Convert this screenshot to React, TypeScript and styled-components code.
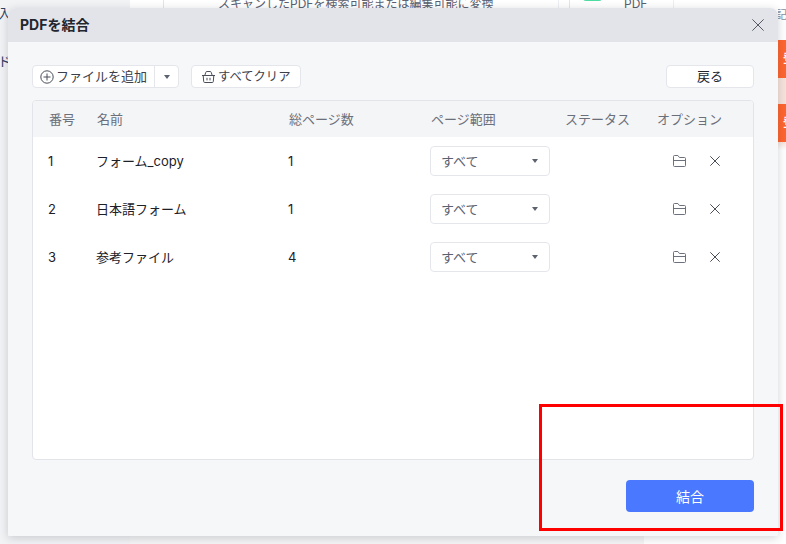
import React from "react";
import styled, { createGlobalStyle } from "styled-components";

const Global = createGlobalStyle`
  html, body { margin: 0; padding: 0; width: 786px; height: 544px; overflow: hidden; background: #fff; }
  body { font-family: Inter, "Noto Sans CJK JP", "Noto Sans", sans-serif; }
  * { box-sizing: border-box; }
`;

const Page = styled.div`
  position: relative;
  width: 786px;
  height: 544px;
  overflow: hidden;
  display: flex;
`;
const SideBar = styled.aside`
  width: 130px;
  background: #f2f3f5;
  display: flex;
  flex-direction: column;
  gap: 30px;
  padding-top: 4px;
  font-size: 13px;
  line-height: 18px;
  color: #2f4060;
`;
const SideLabel = styled.div`
  white-space: nowrap;
  margin-left: -2px;
`;
const Main = styled.main`
  flex: 1;
  display: flex;
  flex-direction: column;
  justify-content: space-between;
`;
const BackRow = styled.div`
  display: flex;
  padding-left: 33px;
  gap: 10px;
`;
const BackCard = styled.div<{ $w: number }>`
  width: ${(p) => p.$w}px;
  height: 12px;
  border-left: 1px solid #e4e5ea;
  border-right: 1px solid #eeeff2;
  margin-top: -2px;
  padding-left: 54px;
  font-size: 12px;
  line-height: 12px;
  color: #5a6070;
  white-space: nowrap;
  overflow: hidden;
  position: relative;
`;
const GreenMark = styled.span`
  position: absolute;
  left: 13px;
  top: 0;
  width: 19px;
  height: 3px;
  background: #4fdca3;
  border-radius: 0 0 3px 3px;
`;
const BottomStrip = styled.div`
  width: 514px;
  height: 8px;
  background: #f5f5f6;
`;
const RightEdge = styled.div`
  position: absolute;
  right: 0;
  top: 0;
  width: 8px;
  height: 150px;
  overflow: hidden;
  display: flex;
  flex-direction: column;
  background: linear-gradient(#fff 0, #fff 78px, #f7e3db 78px, #f7e3db 142px, #fff 150px);
`;
const EdgeNote = styled.div`
  height: 40px;
  flex: none;
  padding-top: 8px;
  margin-left: -2px;
  font-size: 11px;
  line-height: 14px;
  color: #8a8f9c;
  white-space: nowrap;
`;
const EdgeTab = styled.div`
  height: 38px;
  flex: none;
  margin-bottom: 26px;
  background: #ff6530;
  color: #fff;
  font-size: 12px;
  font-weight: 700;
  line-height: 38px;
  padding-left: 5px;
  white-space: nowrap;
`;
const Modal = styled.section`
  position: absolute;
  left: 8px;
  top: 8px;
  width: 770px;
  height: 528px;
  background: #f6f7f9;
  border-radius: 8px 8px 1px 1px;
  box-shadow: 0 2px 10px rgba(30, 35, 50, 0.2);
  display: flex;
  flex-direction: column;
`;
const Header = styled.header`
  height: 34px;
  flex: none;
  background: #e3e4e9;
  border-radius: 8px 8px 0 0;
  display: flex;
  align-items: center;
  justify-content: space-between;
  padding: 0 14px 0 12px;
`;
const Title = styled.h1`
  margin: 0;
  padding-bottom: 2px;
  font-size: 14px;
  font-weight: 700;
  color: #22262f;
`;
const Body = styled.div`
  flex: 1;
  display: flex;
  flex-direction: column;
  padding: 23px 24px 24px;
  min-height: 0;
`;
const Toolbar = styled.div`
  display: flex;
  align-items: center;
  height: 23px;
  gap: 12px;
  margin-bottom: 12px;
`;
const SplitButton = styled.div`
  display: flex;
  height: 23px;
  background: #fff;
  border: 1px solid #e4e6ec;
  border-radius: 4px;
`;
const ToolMain = styled.span`
  display: flex;
  align-items: center;
  gap: 2px;
  padding: 0 7px;
  font-size: 13px;
  color: #3c404a;
  white-space: nowrap;
`;
const Lifted = styled.span`
  padding-bottom: 2px;
`;
const ToolCaret = styled.span`
  width: 24px;
  display: flex;
  align-items: center;
  justify-content: center;
  border-left: 1px solid #e4e6ec;
`;
const ClearButton = styled.button`
  display: flex;
  align-items: center;
  gap: 3px;
  height: 23px;
  width: 110px;
  padding: 0 0 0 10px;
  background: #fff;
  border: 1px solid #e4e6ec;
  border-radius: 4px;
  font: inherit;
  font-size: 12.3px;
  color: #3c404a;
  white-space: nowrap;
`;
const BackButton = styled.button`
  margin-left: auto;
  width: 88px;
  height: 23px;
  background: #fff;
  border: 1px solid #e4e6ec;
  border-radius: 4px;
  font: inherit;
  font-size: 13px;
  color: #22262f;
  padding: 0 0 2px;
`;
const TableCard = styled.div`
  flex: 1;
  background: #fff;
  border: 1px solid #e3e4e9;
  border-radius: 4px;
  overflow: hidden;
`;
const Cols = "48px 192px 142px 134px 92px 1fr";
const HeadRow = styled.div`
  display: grid;
  grid-template-columns: ${Cols};
  align-items: center;
  height: 36px;
  padding: 0 0 2px 16px;
  background: #f4f5f7;
  font-size: 13px;
  color: #6b6f7a;
  white-space: nowrap;
`;
const Row = styled.div`
  display: grid;
  grid-template-columns: ${Cols};
  align-items: center;
  height: 48px;
  padding-left: 15px;
  font-size: 13px;
  color: #1d2027;
  white-space: nowrap;
`;
const Select = styled.div`
  width: 120px;
  height: 30px;
  display: flex;
  align-items: center;
  justify-content: space-between;
  padding: 0 11px 0 10px;
  border: 1px solid #e4e6ec;
  border-radius: 4px;
  color: #5c6270;
`;
const Caret = styled.span`
  width: 0;
  height: 0;
  border-left: 3.5px solid transparent;
  border-right: 3.5px solid transparent;
  border-top: 4px solid #5c6270;
`;
const Actions = styled.div`
  display: flex;
  align-items: center;
  padding-left: 17px;
  gap: 24px;
`;
const Footer = styled.div`
  display: flex;
  justify-content: flex-end;
  margin-top: 20px;
`;
const Merge = styled.button`
  width: 128px;
  height: 32px;
  border: 0;
  border-radius: 4px;
  background: #4a78ff;
  color: #fff;
  font: inherit;
  font-size: 14px;
  padding: 0;
`;
const Highlight = styled.div`
  position: absolute;
  left: 539px;
  top: 404px;
  width: 244px;
  height: 127px;
  border: 3px solid #f00;
  pointer-events: none;
`;

const CloseIcon = ({ size = 10, color = "#555a66" }: { size?: number; color?: string }) => (
  <svg width={size} height={size} viewBox="0 0 10 10" fill="none" stroke={color} strokeWidth={10 / size}>
    <path d="M.3.3l9.4 9.4M9.7.3L.3 9.7" />
  </svg>
);
const FolderIcon = () => (
  <svg width="13" height="12" viewBox="0 0 13 12" fill="none" stroke="#6d717c" strokeWidth="1">
    <path d="M.5 10.5v-9a1 1 0 0 1 1-1h3.4l1.5 2h5.1a1 1 0 0 1 1 1v7a1 1 0 0 1-1 1h-10a1 1 0 0 1-1-1z" />
    <path d="M.5 5.5h12" />
  </svg>
);
const PlusCircle = () => (
  <svg width="14" height="14" viewBox="0 0 14 14" fill="none" stroke="#4a4e59" strokeWidth="1">
    <circle cx="7" cy="7" r="6.2" />
    <path d="M7 3.5v7M3.5 7h7" />
  </svg>
);
const BasketIcon = () => (
  <svg width="13" height="12" viewBox="0 0 13 12" fill="none" stroke="#4a4e59" strokeWidth="1">
    <path d="M0 4.5h13M1.2 4.5l.5 6a1 1 0 0 0 1 1h7.6a1 1 0 0 0 1-1l.5-6" />
    <path d="M2.8 4.5l.9-3a1.2 1.2 0 0 1 1.1-1h3.4a1.2 1.2 0 0 1 1.1 1l.9 3M5 6.8v2.6M8 6.8v2.6" />
  </svg>
);

const rows = [
  { id: 1, name: "フォーム_copy", pages: 1 },
  { id: 2, name: "日本語フォーム", pages: 1 },
  { id: 3, name: "参考ファイル", pages: 4 },
];

export default function App() {
  return (
    <Page>
      <Global />
      <SideBar>
        <SideLabel>入</SideLabel>
        <SideLabel>ド</SideLabel>
      </SideBar>
      <Main>
        <BackRow>
          <BackCard $w={396}>スキャンしたPDFを検索可能または編集可能に変換</BackCard>
          <BackCard $w={105}>
            <GreenMark />
            PDF
          </BackCard>
        </BackRow>
        <BottomStrip />
      </Main>
      <RightEdge>
        <EdgeNote>記全</EdgeNote>
        <EdgeTab>登</EdgeTab>
        <EdgeTab>登</EdgeTab>
      </RightEdge>
      <Modal>
        <Header>
          <Title>PDFを結合</Title>
          <CloseIcon size={12} color="#555a66" />
        </Header>
        <Body>
          <Toolbar>
            <SplitButton>
              <ToolMain>
                <PlusCircle />
                <Lifted>ファイルを追加</Lifted>
              </ToolMain>
              <ToolCaret>
                <Caret />
              </ToolCaret>
            </SplitButton>
            <ClearButton>
              <BasketIcon />
              <Lifted>すべてクリア</Lifted>
            </ClearButton>
            <BackButton>戻る</BackButton>
          </Toolbar>
          <TableCard>
            <HeadRow>
              <span>番号</span>
              <span>名前</span>
              <span>総ページ数</span>
              <span>ページ範囲</span>
              <span>ステータス</span>
              <span>オプション</span>
            </HeadRow>
            {rows.map((r) => (
              <Row key={r.id}>
                <span>{r.id}</span>
                <Lifted>{r.name}</Lifted>
                <span>{r.pages}</span>
                <Select>
                  <Lifted>すべて</Lifted>
                  <Caret />
                </Select>
                <span />
                <Actions>
                  <FolderIcon />
                  <CloseIcon size={10} color="#4a4e59" />
                </Actions>
              </Row>
            ))}
          </TableCard>
          <Footer>
            <Merge>結合</Merge>
          </Footer>
        </Body>
      </Modal>
      <Highlight />
    </Page>
  );
}
